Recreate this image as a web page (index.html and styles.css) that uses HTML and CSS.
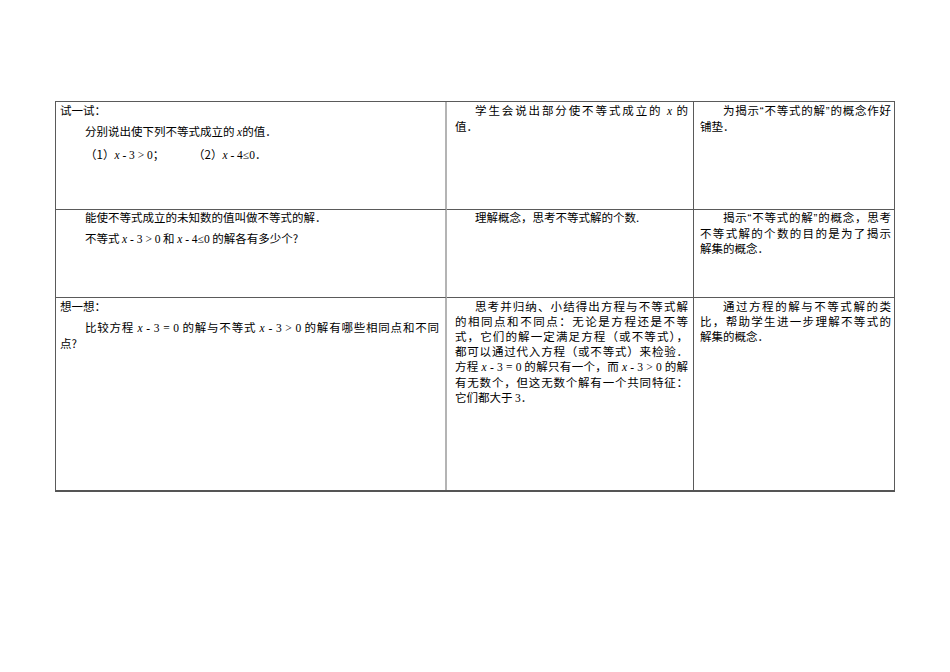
FILE: index.html
```html
<!DOCTYPE html>
<html lang="zh">
<head>
<meta charset="utf-8">
<title>不等式的解</title>
<link rel="stylesheet" href="styles.css">
</head>
<body>
<div class="page">
  <div class="tbl">
    <div class="cell c1 r1">
      <p class="lead">试一试：</p>
      <p class="ind">分别说出使下列不等式成立的 <span class="m"><i>x</i></span>的值．</p>
      <p class="eqs"><span class="eq1">（1）<span class="m"><i>x</i> - 3 &gt; 0</span>；</span><span class="eq2">（2）<span class="m"><i>x</i> - 4≤0</span>．</span></p>
    </div>
    <div class="cell c2 r1">
      <div class="ln j first">学生会说出部分使不等式成立的 <span class="m"><i>x</i></span> 的</div>
      <div class="ln">值．</div>
    </div>
    <div class="cell c3 r1">
      <div class="ln j first">为揭示<span class="q">“</span>不等式的解<span class="q">”</span>的概念作好</div>
      <div class="ln">铺垫．</div>
    </div>

    <div class="cell c1 r2">
      <p class="ind top">能使不等式成立的未知数的值叫做不等式的解．</p>
      <p class="ind">不等式 <span class="m"><i>x</i> - 3 &gt; 0</span> 和 <span class="m"><i>x</i> - 4≤0</span> 的解各有多少个?</p>
    </div>
    <div class="cell c2 r2">
      <div class="ln first">理解概念，思考不等式解的个数.</div>
    </div>
    <div class="cell c3 r2">
      <div class="ln j first">揭示<span class="q">“</span>不等式的解<span class="q">”</span>的概念，思考</div>
      <div class="ln j">不等式解的个数的目的是为了揭示</div>
      <div class="ln">解集的概念．</div>
    </div>

    <div class="cell c1 r3">
      <p class="lead">想一想：</p>
      <div class="para">
        <div class="ln j ind">比较方程 <span class="m"><i>x</i> - 3 = 0</span> 的解与不等式 <span class="m"><i>x</i> - 3 &gt; 0</span> 的解有哪些相同点和不同</div>
        <div class="ln">点?</div>
      </div>
    </div>
    <div class="cell c2 r3">
      <div class="ln j first">思考并归纳、小结得出方程与不等式解</div>
      <div class="ln j">的相同点和不同点：无论是方程还是不等</div>
      <div class="ln j">式，它们的解一定满足方程（或不等式），</div>
      <div class="ln j">都可以通过代入方程（或不等式）来检验．</div>
      <div class="ln j">方程 <span class="m"><i>x</i> - 3 = 0</span> 的解只有一个，而 <span class="m"><i>x</i> - 3 &gt; 0</span> 的解</div>
      <div class="ln j">有无数个，但这无数个解有一个共同特征：</div>
      <div class="ln">它们都大于 <span class="m">3</span>．</div>
    </div>
    <div class="cell c3 r3">
      <div class="ln j first">通过方程的解与不等式解的类</div>
      <div class="ln j">比，帮助学生进一步理解不等式的</div>
      <div class="ln">解集的概念．</div>
    </div>
  </div>
</div>
</body>
</html>
```

FILE: styles.css
```css
* { box-sizing: border-box; }
html, body { margin: 0; padding: 0; background: #ffffff; }
body {
  font-family: "Noto Sans CJK SC", "Noto Sans", sans-serif;
  font-size: 11.5px;
  line-height: 15px;
  color: #000;
}
.page {
  padding: 101px 0 0 55px;
}
.tbl {
  width: 840px;
  display: grid;
  grid-template-columns: 391px 247px 201px;
  grid-template-rows: 108px 88px 192px;
  border-top: 1px solid #5a5a5a;
  border-left: 1px solid #5a5a5a;
  border-bottom: 2px solid #555;
}
.cell {
  border-right: 1px solid #5a5a5a;
  border-bottom: 1px solid #5a5a5a;
  padding-top: 1px;
  overflow: hidden;
}
.r3 { border-bottom: none; }
.r2 { padding-top: 0; }
.c1 {
  padding-left: 4px;
  padding-right: 6px;
  border-right: 2px solid #b4b4b4;
}
.c2 { padding-left: 8px; padding-right: 5px; }
.c3 { padding-left: 6px; padding-right: 3px; }
p { margin: 6px 0 0 0; }
p.lead, p.top { margin-top: 0; }
.ind { text-indent: 25px; }
.c2 .first { text-indent: 20px; }
.c3 .first { text-indent: 23px; }
.para { margin-top: 6px; }
.ln { white-space: nowrap; }
.ln.j {
  text-align: justify;
  text-align-last: justify;
}
.q {
  font-family: "Liberation Sans", Arial, sans-serif;
}
.eqs {
  margin-top: 7px;
  display: flex;
  padding-left: 25px;
}
.eq1 { width: 108px; }
.m {
  font-family: "Liberation Serif", "Times New Roman", serif;
  font-size: 11.5px;
}
.m i { font-style: italic; }
```
